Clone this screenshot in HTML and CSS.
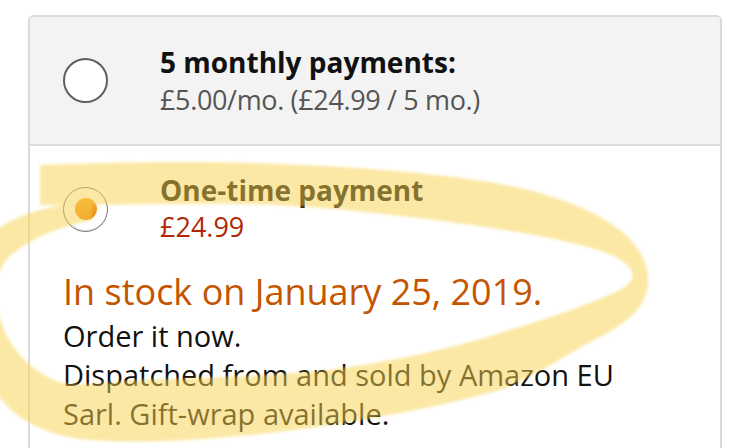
FILE: index.html
```html
<!DOCTYPE html>
<html lang="en">
<head>
<meta charset="utf-8">
<title>Payment options</title>
<link rel="stylesheet" href="styles.css">
</head>
<body>
<div class="page">
  <div class="card">
    <div class="option option-top">
      <span class="radio"></span>
      <div class="opt-text">
        <div class="opt-title">5 monthly payments:</div>
        <div class="opt-sub">£5.00/mo. (£24.99 / 5 mo.)</div>
      </div>
    </div>
    <div class="option-selected">
      <div class="option">
        <span class="radio radio-on"><span class="radio-dot"></span></span>
        <div class="opt-text">
          <div class="opt-title">One-time payment</div>
          <div class="opt-price">£24.99</div>
        </div>
      </div>
      <div class="stock">In stock on January 25, 2019.</div>
      <div class="detail">
        <div>Order it now.</div>
        <div>Dispatched from and sold by Amazon EU</div>
        <div>Sarl. Gift-wrap available.</div>
      </div>
    </div>
  </div>
  <svg class="highlight" width="750" height="448" viewBox="0 0 750 448" aria-hidden="true">
    <defs>
      <filter id="soft" x="-10%" y="-10%" width="120%" height="120%">
        <feGaussianBlur stdDeviation="1.6"/>
      </filter>
    </defs>
    <path class="marker" filter="url(#soft)" d="M 40 165
      C 120 162, 190 161, 250 163
      C 350 166, 430 172, 500 184
      C 545 192, 580 205, 605 220
      C 635 238, 650 260, 648 285
      C 646 305, 630 322, 600 337
      C 570 352, 540 374, 500 390
      C 420 412, 330 427, 250 435
      C 180 442, 130 443, 90 440
      C 50 437, 20 422, 2 400
      C -25 370, -40 330, -38 295
      C -35 260, -20 238, 5 224
      C 28 211, 60 204, 92 201
      L 92 220
      C 62 226, 30 238, 10 256
      C -4 270, -6 290, -2 310
      C 4 340, 24 368, 58 382
      C 80 387, 110 382, 140 380
      C 200 378, 250 377, 320 371
      C 400 361, 460 346, 500 333
      C 560 315, 600 300, 620 290
      C 633 283, 635 275, 630 268
      C 620 256, 600 250, 580 245
      C 540 235, 500 229, 450 222
      C 380 213, 320 206, 250 204
      C 180 203, 110 205, 40 205 Z"/>
  </svg>
</div>
</body>
</html>
```

FILE: styles.css
```css
html, body {
  margin: 0;
  padding: 0;
  background: #ffffff;
}

.page {
  position: relative;
  width: 750px;
  height: 448px;
  overflow: hidden;
  font-family: "Open Sans", "Noto Sans", "DejaVu Sans", sans-serif;
  color: #111111;
}

.card {
  margin: 15px 0 0 28px;
  width: 694px;
  box-sizing: border-box;
  border: 2px solid #dadada;
  border-bottom: none;
  border-radius: 6px 6px 0 0;
  height: 460px;
  overflow: hidden;
}

.option {
  display: flex;
  align-items: center;
  gap: 52px;
}

.option-top {
  height: 127px;
  padding-left: 33px;
  background: #f3f3f3;
  border-bottom: 2px solid #dcdcdc;
}

.radio {
  flex: none;
  width: 45px;
  height: 45px;
  box-sizing: border-box;
  border: 2px solid #5f5f5f;
  border-radius: 50%;
  background: #ffffff;
  display: flex;
  align-items: center;
  justify-content: center;
}

.radio-on {
  border: 1.5px solid #7a7a7a;
  box-shadow: inset 0 -1px 0 rgba(0, 0, 0, 0.15);
}

.radio-dot {
  width: 22px;
  height: 22px;
  border-radius: 50%;
  background: linear-gradient(#f7a935, #ea8a12);
}

.opt-text {
  display: flex;
  flex-direction: column;
}

.opt-title {
  font-size: 28px;
  font-weight: 700;
  line-height: 35px;
  color: #111111;
}

.opt-sub {
  margin-top: 2px;
  font-size: 27px;
  letter-spacing: -0.35px;
  line-height: 35px;
  color: #555555;
}

.opt-price {
  font-size: 27px;
  line-height: 37px;
  color: #b12704;
}

.option-selected {
  padding: 29px 0 0 33px;
}

.option-selected .option {
  margin-top: -2px;
}

.stock {
  margin-top: 25px;
  font-size: 36px;
  line-height: 44px;
  color: #c45500;
}

.detail {
  margin-top: 2px;
  font-size: 29px;
  line-height: 39px;
  color: #111111;
}

.highlight {
  position: absolute;
  left: 0;
  top: 0;
  pointer-events: none;
}

.marker {
  fill: rgb(250, 210, 75);
  fill-opacity: 0.5;
}
```
